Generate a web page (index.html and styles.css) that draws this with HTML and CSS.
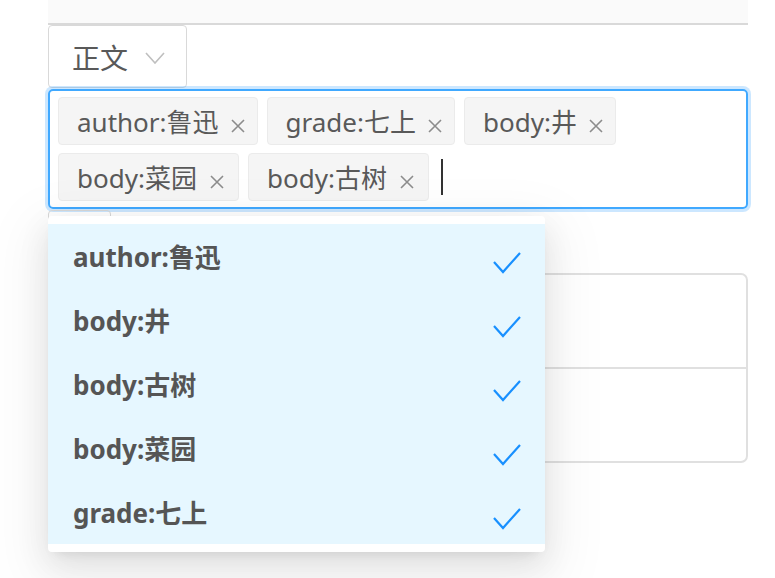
FILE: index.html
```html
<!DOCTYPE html>
<html lang="zh">
<head>
<meta charset="utf-8">
<link rel="stylesheet" href="styles.css">
</head>
<body>
<div class="page">
  <div class="topband"></div>
  <div class="btn-type">正文
    <svg class="arrow" width="20" height="12" viewBox="0 0 20 12"><polyline points="1,1 10,11 19,1" fill="none" stroke="#bfbfbf" stroke-width="1.6"/></svg>
  </div>
  <div class="select">
    <span class="tag">author:鲁迅<svg class="x" width="14" height="14" viewBox="0 0 14 14"><path d="M1 1L13 13M13 1L1 13" stroke="#8c8c8c" stroke-width="1.6"/></svg></span>
    <span class="tag">grade:七上<svg class="x" width="14" height="14" viewBox="0 0 14 14"><path d="M1 1L13 13M13 1L1 13" stroke="#8c8c8c" stroke-width="1.6"/></svg></span>
    <span class="tag">body:井<svg class="x" width="14" height="14" viewBox="0 0 14 14"><path d="M1 1L13 13M13 1L1 13" stroke="#8c8c8c" stroke-width="1.6"/></svg></span>
    <span class="tag wide">body:菜园<svg class="x" width="14" height="14" viewBox="0 0 14 14"><path d="M1 1L13 13M13 1L1 13" stroke="#8c8c8c" stroke-width="1.6"/></svg></span>
    <span class="tag wide">body:古树<svg class="x" width="14" height="14" viewBox="0 0 14 14"><path d="M1 1L13 13M13 1L1 13" stroke="#8c8c8c" stroke-width="1.6"/></svg></span>
    <span class="caret"></span>
  </div>
  <div class="small-btn"></div>
  <div class="card">
    <div class="card-row"></div>
    <div class="card-row"></div>
  </div>

  <div class="menu">
    <div class="item"><span>author:鲁迅</span><svg class="check" width="28" height="22" viewBox="0 0 28 22"><polyline points="1,10 10,20 27,1" fill="none" stroke="#1890ff" stroke-width="2.2"/></svg></div>
    <div class="item"><span>body:井</span><svg class="check" width="28" height="22" viewBox="0 0 28 22"><polyline points="1,10 10,20 27,1" fill="none" stroke="#1890ff" stroke-width="2.2"/></svg></div>
    <div class="item"><span>body:古树</span><svg class="check" width="28" height="22" viewBox="0 0 28 22"><polyline points="1,10 10,20 27,1" fill="none" stroke="#1890ff" stroke-width="2.2"/></svg></div>
    <div class="item"><span>body:菜园</span><svg class="check" width="28" height="22" viewBox="0 0 28 22"><polyline points="1,10 10,20 27,1" fill="none" stroke="#1890ff" stroke-width="2.2"/></svg></div>
    <div class="item"><span>grade:七上</span><svg class="check" width="28" height="22" viewBox="0 0 28 22"><polyline points="1,10 10,20 27,1" fill="none" stroke="#1890ff" stroke-width="2.2"/></svg></div>
  </div>
</div>
</body>
</html>
```
FILE: styles.css
```css
* { box-sizing: border-box; }
html, body { margin: 0; padding: 0; background: #fff; }
body {
  font-family: "Noto Sans", "Noto Sans CJK SC", sans-serif;
  color: #595959;
  width: 775px;
  height: 578px;
  overflow: hidden;
}
.page {
  position: relative;
  margin-left: 48px;
  width: 700px;
}
.topband {
  height: 25px;
  background: #fafafa;
  border-bottom: 2px solid #d9d9d9;
}
.btn-type {
  width: 139px;
  height: 63px;
  border: 1px solid #d9d9d9;
  border-radius: 4px;
  display: flex;
  align-items: center;
  padding-left: 23px;
  font-size: 28px;
  color: #595959;
}
.btn-type .arrow { margin-left: 17px; margin-top: 2px; }
.select {
  margin-top: 1px;
  height: 120px;
  border: 2px solid #40a9ff;
  border-radius: 5px;
  box-shadow: 0 0 0 3px rgba(24,144,255,0.22);
  padding: 6px 8px;
  display: flex;
  flex-wrap: wrap;
  align-content: flex-start;
  gap: 8px 9px;
}
.tag {
  height: 48px;
  display: inline-flex;
  align-items: center;
  padding: 0 12px 0 18px;
  background: #f5f5f5;
  border: 1px solid #ebebeb;
  border-radius: 4px;
  font-size: 26px;
  color: #595959;
  white-space: nowrap;
}
.tag.wide { padding-right: 14px; }
.tag.wide .x { margin-left: 13px; }
.tag .x { margin-left: 12px; margin-top: 9px; }
.caret {
  width: 2px;
  height: 36px;
  background: #333;
  align-self: center;
  margin-left: 3px;
}
.small-btn {
  margin-top: 1px;
  width: 63px;
  height: 63px;
  border: 1px solid #d9d9d9;
  border-radius: 4px;
}
.card {
  margin-top: 0;
  height: 190px;
  border: 2px solid #e0e0e0;
  border-radius: 7px;
  display: flex;
  flex-direction: column;
}
.card-row { flex: 1; }
.card-row + .card-row { border-top: 2px solid #e0e0e0; }
.menu {
  position: absolute;
  left: 0;
  top: 216px;
  width: 497px;
  padding: 8px 0;
  background: #fff;
  border-radius: 4px;
  box-shadow: 0 6px 12px -8px rgba(0,0,0,0.14), 0 12px 32px 0 rgba(0,0,0,0.09), 0 18px 56px 16px rgba(0,0,0,0.05);
}
.item {
  height: 64px;
  background: #e6f7ff;
  display: flex;
  align-items: center;
  justify-content: space-between;
  padding: 0 24px 0 25px;
  font-size: 26px;
  font-weight: 700;
  color: #555;
}
.item .check { margin-top: 14px; }
```
